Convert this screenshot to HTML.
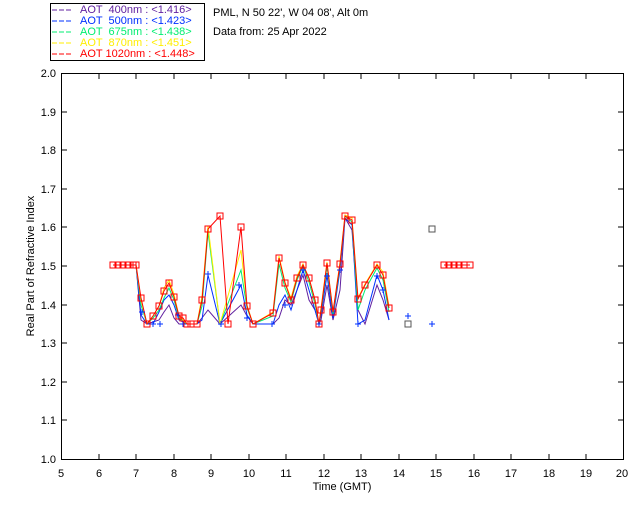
<!DOCTYPE html>
<html><head><meta charset="utf-8"><style>
body{margin:0;background:#fff;width:640px;height:512px;overflow:hidden}
svg{display:block}
text{font-family:"Liberation Sans",sans-serif;font-size:11px}
</style></head><body>
<svg width="640" height="512" viewBox="0 0 640 512" xmlns="http://www.w3.org/2000/svg">
<rect x="50.5" y="3.5" width="154" height="57" fill="#fff" stroke="#000"/>
<g font-size="10.5">
<line x1="52" y1="10" x2="72" y2="10" stroke="#6020a0" stroke-dasharray="5,2"/><text x="80" y="13" fill="#6020a0" xml:space="preserve">AOT  400nm : &lt;1.416&gt;</text>
<line x1="52" y1="21" x2="72" y2="21" stroke="#0030ff" stroke-dasharray="5,2"/><text x="80" y="24" fill="#0030ff" xml:space="preserve">AOT  500nm : &lt;1.423&gt;</text>
<line x1="52" y1="32" x2="72" y2="32" stroke="#00ee70" stroke-dasharray="5,2"/><text x="80" y="35" fill="#00ee70" xml:space="preserve">AOT  675nm : &lt;1.438&gt;</text>
<line x1="52" y1="43" x2="72" y2="43" stroke="#ffee00" stroke-dasharray="5,2"/><text x="80" y="46" fill="#ffee00" xml:space="preserve">AOT  870nm : &lt;1.451&gt;</text>
<line x1="52" y1="54" x2="72" y2="54" stroke="#ff0000" stroke-dasharray="5,2"/><text x="80" y="57" fill="#ff0000" xml:space="preserve">AOT 1020nm : &lt;1.448&gt;</text>
</g>
<text x="213" y="16" font-size="10.5">PML, N 50 22', W 04 08', Alt 0m</text>
<text x="213" y="35" font-size="10.5">Data from: 25 Apr 2022</text>
<rect x="61.5" y="73.5" width="562" height="386" fill="none" stroke="#000"/>
<g stroke="#000">
<path d="M99 459v-5M136 459v-5M174 459v-5M211 459v-5M249 459v-5M286 459v-5M324 459v-5M361 459v-5M399 459v-5M436 459v-5M474 459v-5M511 459v-5M549 459v-5M586 459v-5
M99 74v5M136 74v5M174 74v5M211 74v5M249 74v5M286 74v5M324 74v5M361 74v5M399 74v5M436 74v5M474 74v5M511 74v5M549 74v5M586 74v5
M62 112h5M62 150h5M62 189h5M62 227h5M62 266h5M62 305h5M62 343h5M62 382h5M62 420h5
M623 112h-5M623 150h-5M623 189h-5M623 227h-5M623 266h-5M623 305h-5M623 343h-5M623 382h-5M623 420h-5"/>
</g>
<g text-anchor="end" font-size="10.5">
<text x="56" y="77">2.0</text><text x="56" y="116">1.9</text><text x="56" y="154">1.8</text><text x="56" y="193">1.7</text><text x="56" y="231">1.6</text><text x="56" y="270">1.5</text><text x="56" y="309">1.4</text><text x="56" y="347">1.3</text><text x="56" y="386">1.2</text><text x="56" y="424">1.1</text><text x="56" y="463">1.0</text>
</g>
<g text-anchor="middle" font-size="10.5">
<text x="61" y="477">5</text><text x="99" y="477">6</text><text x="136" y="477">7</text><text x="174" y="477">8</text><text x="211" y="477">9</text><text x="249" y="477">10</text><text x="286" y="477">11</text><text x="324" y="477">12</text><text x="361" y="477">13</text><text x="399" y="477">14</text><text x="436" y="477">15</text><text x="474" y="477">16</text><text x="511" y="477">17</text><text x="549" y="477">18</text><text x="586" y="477">19</text><text x="622" y="477">20</text>
<text x="342" y="490">Time (GMT)</text>
<text transform="translate(34,266) rotate(-90)">Real Part of Refractive Index</text>
</g>
<g fill="none" stroke-width="1">
<polyline stroke="#6020a0" points="136,265 141,320 147,324 153,322 159,320 164,312 169,305 174,318 179,324 187,324 197,324 202,318 208,310 220,324 241,305 247,316 253,324 273,324 279,318 285,300 291,305 297,290 303,275 309,300 315,310 319,324 321,320 327,285 333,320 340,290 345,218 352,230 358,310 365,324 377,285 383,300 389,320"/>
<polyline stroke="#0030ff" points="136,265 141,315 147,324 153,324 159,312 164,300 169,295 174,305 179,320 187,324 197,324 202,320 208,275 220,324 241,285 247,315 253,324 273,324 279,305 285,295 291,310 297,290 303,270 309,290 315,310 319,324 321,315 327,275 333,318 340,270 345,218 352,225 358,324 365,320 377,275 383,290 389,320"/>
<polyline stroke="#00ee70" points="136,265 141,305 147,324 153,318 159,310 164,298 169,288 174,300 179,318 187,324 197,324 202,306 208,232 220,324 241,270 247,308 253,324 273,316 279,264 285,288 291,302 297,280 303,266 309,282 315,304 319,324 321,312 327,266 333,314 340,266 345,216 352,222 358,310 365,290 377,268 383,280 389,312"/>
<polyline stroke="#ffee00" points="136,265 141,300 147,324 153,316 159,306 164,288 169,280 174,294 179,316 187,324 197,324 202,296 208,226 220,324 241,250 247,305 253,324 273,312 279,256 285,282 291,298 297,276 303,264 309,278 315,300 319,324 321,308 327,262 333,312 340,262 345,215 352,218 358,298 365,284 377,264 383,272 389,306"/>
<polyline stroke="#ff0000" points="113,265 136,265 141,298 147,324 153,316 159,306 164,291 169,283 174,297 179,316 183,318 187,324 197,324 202,300 208,229 220,216 228,324 241,227 247,306 253,324 273,313 279,258 285,283 291,300 297,278 303,265 309,278 315,300 319,324 321,310 327,263 333,312 340,264 345,216 352,220 358,299 365,285 377,265 383,275 389,308"/>
<polyline stroke="#ff0000" points="444,265 470,265"/>
</g>
<g fill="none" stroke="#0030ff">
<path d="M139 312h6M142 309v6M150 324h6M153 321v6M157 324h6M160 321v6M175 315h6M178 312v6M180 324h6M183 321v6M205 274h6M208 271v6M218 324h6M221 321v6M236 285h6M239 282v6M244 318h6M247 315v6M269 324h6M272 321v6M282 305h6M285 302v6M300 270h6M303 267v6M316 324h6M319 321v6M324 276h6M327 273v6M337 270h6M340 267v6M355 324h6M358 321v6M374 276h6M377 273v6M380 290h6M383 287v6M405 316h6M408 313v6M429 324h6M432 321v6"/>
</g>
<g fill="none" stroke="#ff0000">
<path d="M110 262h6v6h-6zM115 262h6v6h-6zM120 262h6v6h-6zM125 262h6v6h-6zM130 262h6v6h-6zM133 262h6v6h-6zM138 295h6v6h-6zM144 321h6v6h-6zM150 313h6v6h-6zM156 303h6v6h-6zM161 288h6v6h-6zM166 280h6v6h-6zM171 294h6v6h-6zM176 313h6v6h-6zM180 315h6v6h-6zM184 321h6v6h-6zM188 321h6v6h-6zM194 321h6v6h-6zM199 297h6v6h-6zM205 226h6v6h-6zM217 213h6v6h-6zM225 321h6v6h-6zM238 224h6v6h-6zM244 303h6v6h-6zM250 321h6v6h-6zM270 310h6v6h-6zM276 255h6v6h-6zM282 280h6v6h-6zM288 297h6v6h-6zM294 275h6v6h-6zM300 262h6v6h-6zM306 275h6v6h-6zM312 297h6v6h-6zM316 321h6v6h-6zM318 307h6v6h-6zM324 260h6v6h-6zM330 309h6v6h-6zM337 261h6v6h-6zM342 213h6v6h-6zM349 217h6v6h-6zM355 296h6v6h-6zM362 282h6v6h-6zM374 262h6v6h-6zM380 272h6v6h-6zM386 305h6v6h-6zM441 262h6v6h-6zM446 262h6v6h-6zM451 262h6v6h-6zM456 262h6v6h-6zM461 262h6v6h-6zM467 262h6v6h-6z"/>
<path d="M405 321h6v6h-6zM429 226h6v6h-6z" stroke="#555"/>
</g>
</svg>
</body></html>
